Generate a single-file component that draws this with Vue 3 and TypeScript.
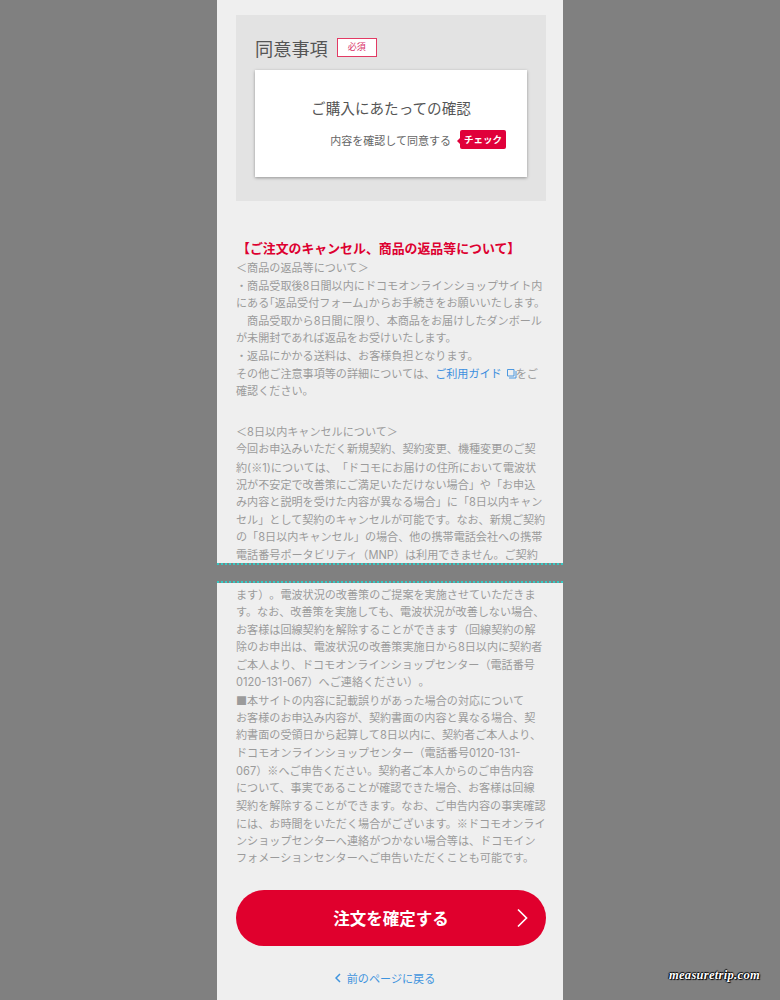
<script setup lang="ts">
const returnLinesBefore: string[] = [
  '＜商品の返品等について＞',
  '・商品受取後8日間以内にドコモオンラインショップサイト内',
]
const returnLinesAfter: string[] = [
  '　商品受取から8日間に限り、本商品をお届けしたダンボール',
  'が未開封であれば返品をお受けいたします。',
  '・返品にかかる送料は、お客様負担となります。',
]
const cancelLines: string[] = [
  '＜8日以内キャンセルについて＞',
  '今回お申込みいただく新規契約、契約変更、機種変更のご契',
  '約(※1)については、「ドコモにお届けの住所において電波状',
  '況が不安定で改善策にご満足いただけない場合」や「お申込',
  'み内容と説明を受けた内容が異なる場合」に「8日以内キャン',
  'セル」として契約のキャンセルが可能です。なお、新規ご契約',
  'の「8日以内キャンセル」の場合、他の携帯電話会社への携帯',
  '電話番号ポータビリティ（MNP）は利用できません。ご契約',
]
const continuedLines: string[] = [
  'ます）。電波状況の改善策のご提案を実施させていただきま',
  'す。なお、改善策を実施しても、電波状況が改善しない場合、',
  'お客様は回線契約を解除することができます（回線契約の解',
  '除のお申出は、電波状況の改善策実施日から8日以内に契約者',
  'ご本人より、ドコモオンラインショップセンター（電話番号',
  '0120-131-067）へご連絡ください）。',
  '■本サイトの内容に記載誤りがあった場合の対応について',
  'お客様のお申込み内容が、契約書面の内容と異なる場合、契',
  '約書面の受領日から起算して8日以内に、契約者ご本人より、',
  'ドコモオンラインショップセンター（電話番号0120-131-',
  '067）※へご申告ください。契約者ご本人からのご申告内容',
  'について、事実であることが確認できた場合、お客様は回線',
  '契約を解除することができます。なお、ご申告内容の事実確認',
  'には、お時間をいただく場合がございます。※ドコモオンライ',
  'ンショップセンターへ連絡がつかない場合等は、ドコモイン',
  'フォメーションセンターへご申告いただくことも可能です。',
]

// ※ and ■ must come from the CJK face, where they are full width.
const parts = (line: string): string[] => line.split(/([※■])/).filter(Boolean)
const isMark = (part: string): boolean => part === '※' || part === '■'
</script>

<template>
  <div class="page">
    <main class="column">
      <section class="agree">
        <div class="agree-head">
          <h2 class="agree-title">同意事項</h2>
          <span class="required">必須</span>
        </div>
        <div class="confirm">
          <p class="confirm-title">ご購入にあたっての確認</p>
          <div class="confirm-row">
            <span class="confirm-label">内容を確認して同意する</span>
            <span class="check-tag">チェック</span>
          </div>
        </div>
      </section>

      <section class="notice">
        <h3 class="notice-title">【ご注文のキャンセル、商品の返品等について】</h3>
        <div v-for="line in returnLinesBefore" :key="line" class="line">{{ line }}</div>
        <div class="line">にある<span class="halt">「</span>返品受付フォーム<span class="halt">」</span>からお手続きをお願いいたします。</div>
        <div v-for="line in returnLinesAfter" :key="line" class="line">{{ line }}</div>
        <div class="line">その他ご注意事項等の詳細については、<a class="guide">ご利用ガイド<svg class="ext" viewBox="0 0 11 11" width="11" height="11" fill="none" stroke="#3b8ede" stroke-width="0.9"><path d="M1.5 1.5h6.5v6.5h-6.5z" /><path d="M10 3v7h-7" /></svg></a>をご</div>
        <div class="line">確認ください。</div>
        <div class="cancel">
          <div v-for="line in cancelLines" :key="line" class="line"><span v-for="(part, i) in parts(line)" :key="i" :class="{ mark: isMark(part) }">{{ part }}</span></div>
        </div>
      </section>

      <div class="cut"></div>

      <section class="continued">
        <div v-for="line in continuedLines" :key="line" class="line"><span v-for="(part, i) in parts(line)" :key="i" :class="{ mark: isMark(part) }">{{ part }}</span></div>
      </section>

      <button class="submit" type="button">
        <span>注文を確定する</span>
        <svg class="submit-arrow" viewBox="0 0 12 20" width="12" height="20" fill="none" stroke="#fff" stroke-width="1.7"><path d="M2 1.5l8.5 8.5-8.5 8.5" /></svg>
      </button>

      <a class="back">
        <svg viewBox="0 0 6 10" width="6" height="10" fill="none" stroke="#3f94de" stroke-width="1.5"><path d="M5 1l-4 4 4 4" /></svg>
        <span>前のページに戻る</span>
      </a>
    </main>
    <span class="watermark">measuretrip.com</span>
  </div>
</template>

<style>
html, body {
  margin: 0;
  background: #808080;
}
</style>

<style scoped>
.page {
  position: relative;
  height: 1000px;
  overflow: hidden;
  display: flex;
  justify-content: center;
  background: #808080;
  font-family: "Noto Sans CJK JP", "Noto Sans", sans-serif;
  text-spacing-trim: space-all;
}
.column {
  width: 346px;
  height: 1000px;
  padding-top: 15px;
  box-sizing: border-box;
  background: #efefef;
  display: flex;
  flex-direction: column;
}
.agree {
  margin: 0 17px 0 19px;
  height: 186px;
  padding: 19px 19px 0;
  box-sizing: border-box;
  background: #e3e3e3;
}
.agree-head {
  display: flex;
  align-items: center;
  height: 27px;
  gap: 9px;
}
.agree-title {
  margin: 0;
  font-size: 18.2px;
  font-weight: 400;
  line-height: 26px;
  color: #555555;
}
.required {
  width: 40px;
  height: 19px;
  box-sizing: border-box;
  border: 1.5px solid #e23a64;
  background: #ffffff;
  color: #d9336a;
  font-size: 9px;
  line-height: 16px;
  text-align: center;
}
.confirm {
  margin-top: 9px;
  height: 107px;
  padding: 27px 21px 0 0;
  box-sizing: border-box;
  background: #ffffff;
  box-shadow: 0 1px 3px rgba(0, 0, 0, 0.35);
}
.confirm-title {
  margin: 0 0 0 21px;
  font-size: 14.6px;
  line-height: 22px;
  color: #555555;
  text-align: center;
}
.confirm-row {
  margin-top: 9px;
  display: flex;
  justify-content: flex-end;
  align-items: center;
  gap: 9px;
}
.confirm-label {
  font-size: 11px;
  line-height: 19px;
  color: #666666;
  margin-top: 3px;
}
.check-tag {
  position: relative;
  width: 46px;
  height: 19px;
  border-radius: 2px;
  background: #e0003a;
  color: #ffffff;
  font-size: 9.5px;
  font-weight: 700;
  line-height: 18px;
  text-align: center;
}
.check-tag::before {
  content: "";
  position: absolute;
  left: -3px;
  top: 8px;
  border-style: solid;
  border-width: 3px 3px 3px 0;
  border-color: transparent #e0003a transparent transparent;
}
.notice {
  margin: 37px 0 -2px;
  padding: 0 19px;
}
.notice-title {
  margin: 0 0 2px 1px;
  font-size: 12.9px;
  font-weight: 700;
  line-height: 20px;
  color: #dd0030;
  white-space: nowrap;
}
.line {
  height: 17.6px;
  font-family: "Inter", "Noto Sans CJK JP", sans-serif;
  font-size: 11.1px;
  line-height: 17.6px;
  color: #9b9b9b;
  white-space: pre;
}
.mark {
  font-family: "Noto Sans CJK JP", sans-serif;
}
.halt {
  font-feature-settings: "halt";
}
.guide {
  color: #3b8ede;
}
.ext {
  vertical-align: -1px;
  margin: 0 -1px 0 4px;
}
.cancel {
  margin-top: 23px;
}
.cut {
  flex: none;
  height: 20px;
  margin-top: 0;
  box-sizing: border-box;
  background: #808080;
  border-top: 2px dotted #35c9c4;
  border-bottom: 2px dotted #35c9c4;
}
.continued {
  margin-top: 4px;
  padding: 0 19px;
}
.submit {
  flex: none;
  position: relative;
  margin: 22px 17px 0 19px;
  height: 56px;
  border: 0;
  border-radius: 28px;
  background: #e0002d;
  color: #ffffff;
  font-family: inherit;
  font-size: 16.5px;
  font-weight: 700;
  padding: 0;
}
.submit-arrow {
  position: absolute;
  right: 18px;
  top: 18px;
}
.back {
  margin-top: 24px;
  display: flex;
  justify-content: center;
  align-items: center;
  gap: 6px;
  font-size: 11.1px;
  line-height: 16px;
  color: #3f94de;
  padding-right: 10px;
}
.watermark {
  position: absolute;
  left: 669px;
  top: 967px;
  font-family: "Liberation Serif", serif;
  font-style: italic;
  font-weight: 700;
  font-size: 12.5px;
  letter-spacing: 0.3px;
  line-height: 16px;
  color: #ffffff;
  text-shadow: 1px 1px 1px #000, -1px 0 1px #000, 0 -1px 1px #000;
}
</style>
